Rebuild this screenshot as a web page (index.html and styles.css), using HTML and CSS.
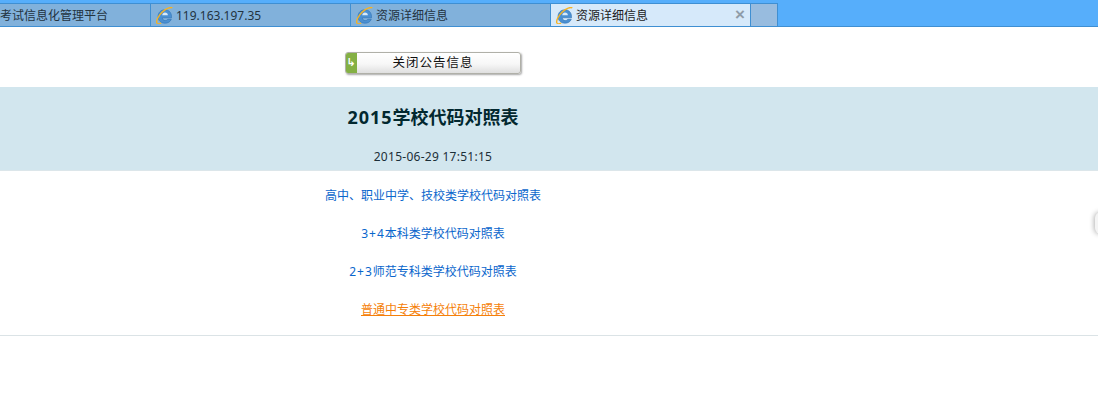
FILE: index.html
```html
<!DOCTYPE html>
<html lang="zh-CN">
<head>
<meta charset="utf-8">
<title>资源详细信息</title>
<link rel="stylesheet" href="styles.css">
</head>
<body>
<svg class="defs" width="0" height="0" aria-hidden="true">
  <defs>
    <symbol id="ie" viewBox="0 0 17 17">
      <path d="M2 9.800C2 5.600 4.900 2.800 8.800 2.800c3.900 0 6.700 2.700 6.700 6.700v1.300H6.300c.1 1.700 1.200 2.800 2.900 2.800 1.200 0 2-.5 2.600-1.300h3.500c-1 2.500-3.300 3.900-6.300 3.900-4.100 0-7-2.800-7-6.400z" fill="#4a90d2" stroke="#2f72b4" stroke-width=".6"/>
      <path d="M6.200 8.200h5.700c-.1-1.700-1.200-2.700-2.900-2.700-1.500 0-2.600 1.100-2.800 2.700z" fill="#d8e9f8"/>
      <path d="M.9 16.100C-.1 13.800 2.400 8.600 6.300 5 10.300 1.400 14.800-.3 16.300.9" fill="none" stroke="#f5b324" stroke-width="1.400"/>
      <path d="M.9 16.100c.7 1 2.500.9 4.300 0" fill="none" stroke="#f5b324" stroke-width="1.100"/>
    </symbol>
  </defs>
</svg>

<nav class="tabbar">
  <div class="tab tab-first"><span class="tab-label">考试信息化管理平台</span></div>
  <div class="tab"><svg class="ie-icon"><use href="#ie"/></svg><span class="tab-label">119.163.197.35</span></div>
  <div class="tab"><svg class="ie-icon"><use href="#ie"/></svg><span class="tab-label">资源详细信息</span></div>
  <div class="tab tab-active"><svg class="ie-icon"><use href="#ie"/></svg><span class="tab-label">资源详细信息</span><span class="tab-close">×</span></div>
  <div class="tab tab-empty"></div>
</nav>

<main class="page">
  <div class="action-row">
    <button class="close-btn" type="button">
      <span class="close-btn-mark">↳</span>
      <span class="close-btn-text">关闭公告信息</span>
    </button>
  </div>

  <header class="notice-head">
    <div class="notice-inner">
      <h1 class="notice-title"><span class="title-digits">2015</span>学校代码对照表</h1>
      <p class="notice-date">2015-06-29 17:51:15</p>
    </div>
  </header>

  <section class="notice-links">
    <p class="link-row"><a class="link" href="#">高中、职业中学、技校类学校代码对照表</a></p>
    <p class="link-row"><a class="link" href="#"><span class="link-digits">3+4</span>本科类学校代码对照表</a></p>
    <p class="link-row"><a class="link" href="#"><span class="link-digits">2+3</span>师范专科类学校代码对照表</a></p>
    <p class="link-row"><a class="link link-hover" href="#">普通中专类学校代码对照表</a></p>
  </section>
</main>

<div class="edge-handle"></div>
</body>
</html>
```
FILE: styles.css
```css
* {
  box-sizing: border-box;
}

html,
body {
  margin: 0;
  padding: 0;
  height: 100%;
  overflow: hidden;
  background: #fff;
  font-family: "Noto Sans", "Noto Sans CJK SC", sans-serif;
  font-size: 12px;
}

.defs {
  display: block;
  height: 0;
}

.tabbar {
  display: flex;
  height: 27px;
  padding-top: 3px;
  background: #56aefb;
  border-bottom: 1px solid #3f8fd2;
}

.tab {
  display: flex;
  align-items: center;
  width: 200px;
  height: 23px;
  padding-left: 5px;
  background: #81b1db;
  border-left: 1px solid #3f8fd2;
  border-top: 1px solid #3f8fd2;
  color: #23333f;
  font-size: 12px;
  white-space: nowrap;
}

.tab-first {
  width: 150px;
  padding-left: 0;
  border-left: 0;
}

.tab-active {
  position: relative;
  background: #d6e9fa;
  color: #1a1a1a;
}

.tab-empty {
  width: 28px;
  padding: 0;
  background: #98bcdf;
  border-right: 1px solid #3f8fd2;
}

.ie-icon {
  flex: none;
  width: 17px;
  height: 17px;
  margin-right: 3px;
}

.tab-label {
  line-height: 23px;
}

.tab-close {
  position: absolute;
  right: 3px;
  top: 0;
  width: 14px;
  color: #8f9ca8;
  font-family: "Liberation Sans", sans-serif;
  font-size: 17px;
  font-weight: bold;
  line-height: 22px;
  text-align: center;
}

.action-row {
  display: flex;
  width: 866px;
  justify-content: center;
  padding-top: 25px;
  height: 60px;
}

.close-btn {
  display: flex;
  width: 176px;
  height: 22px;
  margin-left: -1px;
  padding: 0;
  overflow: hidden;
  border: 1px solid #b0b0a8;
  border-radius: 3px;
  background: linear-gradient(#ffffff 0%, #f7f7f7 55%, #dfdfdf 100%);
  box-shadow: 1px 1px 2px rgba(0, 0, 0, .35);
  font: inherit;
}

.close-btn-mark {
  flex: none;
  width: 11px;
  height: 100%;
  background: #84b044;
  color: #fff;
  font-family: "DejaVu Sans", sans-serif;
  font-size: 11px;
  font-weight: bold;
  line-height: 19px;
  text-align: center;
}

.close-btn-text {
  flex: 1;
  padding-right: 10px;
  color: #111;
  font-size: 12.500px;
  letter-spacing: 1px;
  line-height: 20px;
  text-align: center;
}

.notice-head {
  height: 84px;
  background: #d2e6ee;
  border-bottom: 1px solid #dce6ea;
}

.notice-inner {
  width: 866px;
  text-align: center;
}

.notice-title {
  margin: 0;
  padding-top: 17px;
  color: #02282f;
  font-size: 18px;
  font-weight: 700;
  line-height: 26px;
}

.title-digits {
  letter-spacing: .9px;
}

.notice-date {
  margin: 0;
  padding-top: 17px;
  color: #1c2f38;
  font-size: 12px;
  letter-spacing: .27px;
  line-height: 20px;
}

.notice-links {
  width: 100%;
  height: 165px;
  padding-top: 6px;
  border-bottom: 1px solid #dbe3e6;
}

.link-row {
  width: 866px;
  height: 38px;
  margin: 0;
  line-height: 38px;
  text-align: center;
}

.link {
  color: #0a66cc;
  text-decoration: none;
  font-size: 12px;
}

.link-digits {
  letter-spacing: 1px;
}

.link-hover {
  color: #f57f0a;
  text-decoration: underline;
}

.edge-handle {
  position: absolute;
  top: 212px;
  right: -9px;
  width: 12px;
  height: 22px;
  background: #f4f4f4;
  border-radius: 6px 0 0 6px;
  box-shadow: -1px 0 5px rgba(0, 0, 0, .3);
}
```
